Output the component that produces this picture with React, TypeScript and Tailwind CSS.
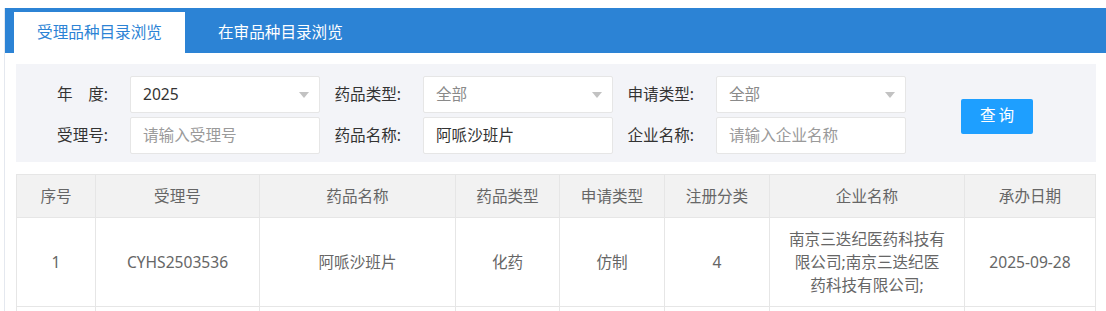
import React from "react";

const font = "font-['Noto_Sans','Noto_Sans_CJK_SC',sans-serif]";

function SelectBox({ value, muted }: { value: string; muted?: boolean }) {
  return (
    <div className="relative flex items-center w-[190px] h-[37px] bg-white border border-[#e6e6e6] rounded-[2px] pl-[12px]">
      <span className={muted ? "text-[#8a8a8a]" : "text-[#333]"}>{value}</span>
      <span className="absolute right-[10px] top-[15px] w-0 h-0 border-l-[5.5px] border-r-[5.5px] border-t-[6px] border-l-transparent border-r-transparent border-t-[#c2c2c2]" />
    </div>
  );
}

function TextBox({ value, placeholder }: { value?: string; placeholder: string }) {
  return (
    <div className="flex items-center w-[190px] h-[37px] bg-white border border-[#e6e6e6] rounded-[2px] pl-[12px]">
      {value ? <span className="text-[#333]">{value}</span> : <span className="text-[#9a9a9a]">{placeholder}</span>}
    </div>
  );
}

function Label({ children }: { children: React.ReactNode }) {
  return <div className="w-[103px] pr-[22px] text-right text-[#333] whitespace-pre">{children}</div>;
}

const columns = [
  { title: "序号", w: "w-[79px]" },
  { title: "受理号", w: "w-[164px]" },
  { title: "药品名称", w: "w-[196px]" },
  { title: "药品类型", w: "w-[104px]" },
  { title: "申请类型", w: "w-[105px]" },
  { title: "注册分类", w: "w-[105px]" },
  { title: "企业名称", w: "w-[195px]" },
  { title: "承办日期", w: "w-[131px]" },
];

const rows = [
  ["1", "CYHS2503536", "阿哌沙班片", "化药", "仿制", "4", "南京三迭纪医药科技有限公司;南京三迭纪医药科技有限公司;", "2025-09-28"],
];

export default function App() {
  return (
    <div className={`${font} text-[15.6px] pl-[4px] bg-white min-h-[311px]`}>
      <div className="mt-[8px] border-l border-[#e4e8ef] min-h-[303px]">
        <div className="flex items-end h-[45px] bg-[#2c83d5] pl-[9px]">
          <div className="h-[41px] w-[171px] bg-white text-[#2c83d5] flex items-center justify-center">
            受理品种目录浏览
          </div>
          <div className="h-[41px] px-[33px] text-white flex items-center">在审品种目录浏览</div>
        </div>

        <div className="ml-[11px] mr-[10px] mt-[11px] bg-[#f3f4f8] px-[11px] pt-[12px] pb-[8px] flex items-center">
          <div className="flex flex-col gap-[4px]">
            <div className="flex items-center">
              <Label>{"年　度:"}</Label>
              <SelectBox value="2025" />
              <Label>药品类型:</Label>
              <SelectBox value="全部" muted />
              <Label>申请类型:</Label>
              <SelectBox value="全部" muted />
            </div>
            <div className="flex items-center">
              <Label>受理号:</Label>
              <TextBox placeholder="请输入受理号" />
              <Label>药品名称:</Label>
              <TextBox value="阿哌沙班片" placeholder="" />
              <Label>企业名称:</Label>
              <TextBox placeholder="请输入企业名称" />
            </div>
          </div>
          <button className="ml-[55px] mt-[2px] w-[72px] h-[35px] bg-[#1e9fff] text-white rounded-[2px] tracking-[3px] pl-[3px]">
            查询
          </button>
        </div>

        <div className="ml-[11px] mr-[11px] mt-[12px]">
          <table className="w-full border-collapse table-fixed text-[#666] leading-[23px]">
            <thead>
              <tr className="bg-[#f2f2f2]">
                {columns.map((c) => (
                  <th key={c.title} className={`${c.w} font-normal border border-[#e6e6e6] py-[9.5px] px-[18px] text-center`}>
                    {c.title}
                  </th>
                ))}
              </tr>
            </thead>
            <tbody>
              {rows.map((r, i) => (
                <tr key={i}>
                  {r.map((cell, j) => (
                    <td key={j} className="border border-[#e6e6e6] py-[9.5px] px-[18px] text-center">
                      {cell}
                    </td>
                  ))}
                </tr>
              ))}
              <tr>
                {columns.map((c) => (
                  <td key={c.title} className="border border-[#e6e6e6] h-[42px]" />
                ))}
              </tr>
            </tbody>
          </table>
        </div>
      </div>
    </div>
  );
}
